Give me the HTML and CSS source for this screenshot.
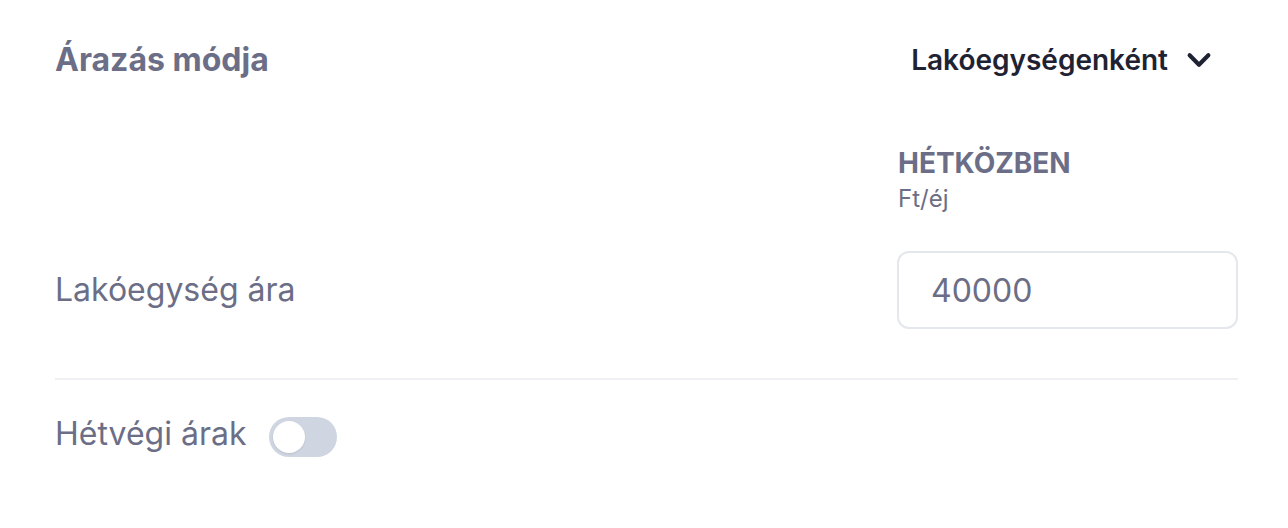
FILE: index.html
```html
<!DOCTYPE html>
<html lang="hu">
<head>
<meta charset="UTF-8">
<meta name="viewport" content="width=device-width, initial-scale=1.0">
<title>Árazás</title>
<link rel="stylesheet" href="styles.css">
</head>
<body>
  <div class="panel">
    <div class="head-row">
      <h2 class="title">Árazás módja</h2>
      <button class="select">
        <span>Lakóegységenként</span>
        <svg class="chevron" viewBox="0 0 24 24" fill="none" stroke="currentColor" stroke-width="3.6" stroke-linecap="round" stroke-linejoin="round"><path d="M4 8l8 8 8-8"/></svg>
      </button>
    </div>

    <div class="col-head">
      <div class="col-title">HÉTKÖZBEN</div>
      <div class="col-unit">Ft/éj</div>
    </div>

    <div class="price-row">
      <div class="label">Lakóegység ára</div>
      <input class="price-input" type="text" value="40000">
    </div>

    <hr class="divider">

    <div class="toggle-row">
      <span class="label">Hétvégi árak</span>
      <span class="toggle"><span class="knob"></span></span>
    </div>
  </div>
</body>
</html>
```

FILE: styles.css
```css
body {
  margin: 0;
  background: #fff;
  font-family: 'Inter', 'Liberation Sans', sans-serif;
  color: #6b6e86;
}
.panel {
  padding: 40px 50px 0 55px;
}
.head-row {
  display: flex;
  justify-content: space-between;
  align-items: center;
  height: 40px;
}
.title {
  margin: 0;
  font-size: 32px;
  line-height: 40px;
  font-weight: 700;
  color: #6b6e86;
}
.select {
  display: flex;
  align-items: center;
  gap: 17px;
  background: none;
  border: none;
  padding: 0 25px 0 0;
  font-family: inherit;
  font-size: 28px;
  line-height: 36px;
  font-weight: 600;
  color: #1e2232;
  cursor: pointer;
}
.chevron {
  width: 28px;
  height: 28px;
}
.col-head {
  margin-top: 65px;
  margin-left: 843px;
}
.col-title {
  font-size: 28px;
  font-weight: 700;
  line-height: 36px;
  color: #6b6e86;
}
.col-unit {
  font-size: 24px;
  line-height: 32px;
  color: #6b6e86;
  margin-top: 2px;
}
.price-row {
  display: flex;
  justify-content: space-between;
  align-items: center;
  margin-top: 36px;
}
.label {
  font-size: 32px;
  line-height: 40px;
  color: #6b6e86;
}
.price-input {
  box-sizing: border-box;
  width: 341px;
  height: 78px;
  border: 2px solid #e4e7ec;
  border-radius: 12px;
  padding: 0 32px;
  font-family: inherit;
  font-size: 32px;
  color: #6b6e86;
  outline: none;
}
.divider {
  border: none;
  border-top: 2px solid #eef0f4;
  margin: 49px 0 0 0;
}
.toggle-row {
  display: flex;
  align-items: center;
  gap: 23px;
  margin-top: 37px;
}
.toggle-row .label {
  margin-top: -6px;
}
.toggle {
  box-sizing: border-box;
  width: 68px;
  height: 40px;
  border-radius: 20px;
  background: #cfd5e1;
  padding: 4px;
  display: flex;
}
.knob {
  width: 32px;
  height: 32px;
  border-radius: 50%;
  background: #fff;
  box-shadow: 0 1px 2px rgba(0, 0, 0, 0.1);
}
```
